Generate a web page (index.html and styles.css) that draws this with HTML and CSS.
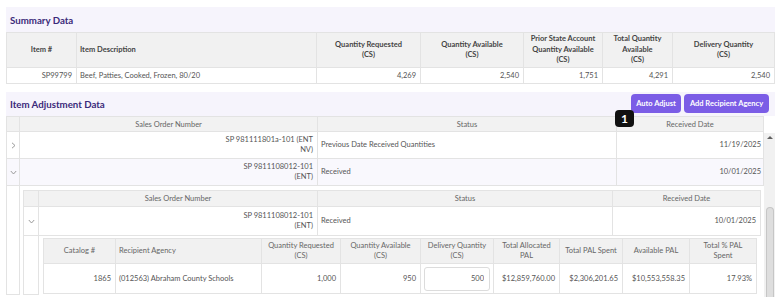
FILE: index.html
```html
<!DOCTYPE html>
<html lang="en">
<head>
<meta charset="utf-8">
<title>Item Adjustment</title>
<link rel="stylesheet" href="styles.css">
</head>
<body>
<div class="page">
  <section class="panel">
    <h2 class="panel-title">Summary Data</h2>
  </section>
  <table class="grid summary">
    <colgroup>
      <col class="c70"><col class="c240"><col class="c104"><col class="c103"><col class="c79"><col class="c70"><col class="c102">
    </colgroup>
    <thead>
      <tr>
        <th>Item #</th>
        <th class="left">Item Description</th>
        <th>Quantity Requested<br>(CS)</th>
        <th>Quantity Available<br>(CS)</th>
        <th>Prior State Account Quantity Available (CS)</th>
        <th>Total Quantity Available<br>(CS)</th>
        <th>Delivery Quantity<br>(CS)</th>
      </tr>
    </thead>
    <tbody>
      <tr>
        <td>SP99799</td>
        <td class="left">Beef, Patties, Cooked, Frozen, 80/20</td>
        <td>4,269</td>
        <td>2,540</td>
        <td>1,751</td>
        <td>4,291</td>
        <td>2,540</td>
      </tr>
    </tbody>
  </table>

  <section class="panel panel-adjust">
    <h2 class="panel-title">Item Adjustment Data</h2>
    <div class="actions">
      <button class="btn btn-auto">Auto Adjust</button>
      <button class="btn btn-add">Add Recipient Agency</button>
      <span class="badge">1</span>
    </div>
  </section>

  <div class="scroll-wrap">
    <table class="grid outer">
      <colgroup>
        <col class="c13"><col class="c298"><col class="c299"><col class="c147">
      </colgroup>
      <thead>
        <tr>
          <th></th>
          <th>Sales Order Number</th>
          <th>Status</th>
          <th>Received Date</th>
        </tr>
      </thead>
      <tbody>
        <tr class="row">
          <td class="exp"><svg width="5" height="7" viewBox="0 0 5 7"><polyline points="1,0.8 4,3.5 1,6.2" fill="none" stroke="#8f8f8f" stroke-width="0.9"/></svg></td>
          <td class="num so">SP 981111801a-101 (ENT<br>NV)</td>
          <td class="txt">Previous Date Received Quantities</td>
          <td class="num date">11/19/2025</td>
        </tr>
        <tr class="row expanded">
          <td class="exp"><svg width="7" height="5" viewBox="0 0 7 5"><polyline points="0.8,1 3.5,4 6.2,1" fill="none" stroke="#8f8f8f" stroke-width="0.9"/></svg></td>
          <td class="num so">SP 9811108012-101<br>(ENT)</td>
          <td class="txt">Received</td>
          <td class="num date">10/01/2025</td>
        </tr>
        <tr class="detail">
          <td class="detail-hier"></td>
          <td class="detail-cell" colspan="3">
            <table class="grid nested">
              <colgroup>
                <col class="c15"><col class="c279"><col class="c295"><col class="c148">
              </colgroup>
              <thead>
                <tr>
                  <th></th>
                  <th>Sales Order Number</th>
                  <th>Status</th>
                  <th>Received Date</th>
                </tr>
              </thead>
              <tbody>
                <tr class="row">
                  <td class="exp"><svg width="7" height="5" viewBox="0 0 7 5"><polyline points="0.8,1 3.5,4 6.2,1" fill="none" stroke="#8f8f8f" stroke-width="0.9"/></svg></td>
                  <td class="num so">SP 9811108012-101<br>(ENT)</td>
                  <td class="txt">Received</td>
                  <td class="num date-nested">10/01/2025</td>
                </tr>
                <tr class="detail">
                  <td class="detail-hier"></td>
                  <td class="detail-cell inner" colspan="3">
                    <table class="grid agencies">
                      <colgroup>
                        <col class="c72"><col class="c146"><col class="c79"><col class="c80"><col class="c73"><col class="c66"><col class="c63"><col class="c67"><col class="c67">
                      </colgroup>
                      <thead>
                        <tr>
                          <th>Catalog #</th>
                          <th class="left">Recipient Agency</th>
                          <th>Quantity Requested<br>(CS)</th>
                          <th>Quantity Available<br>(CS)</th>
                          <th>Delivery Quantity<br>(CS)</th>
                          <th>Total Allocated<br>PAL</th>
                          <th>Total PAL Spent</th>
                          <th>Available PAL</th>
                          <th>Total % PAL<br>Spent</th>
                        </tr>
                      </thead>
                      <tbody>
                        <tr>
                          <td class="num">1865</td>
                          <td class="left">(012563) Abraham County Schools</td>
                          <td class="num">1,000</td>
                          <td class="num">950</td>
                          <td class="input-cell"><input class="qty-input" type="text" value="500"></td>
                          <td class="num">$12,859,760.00</td>
                          <td class="num">$2,306,201.65</td>
                          <td class="num">$10,553,558.35</td>
                          <td class="num">17.93%</td>
                        </tr>
                      </tbody>
                    </table>
                  </td>
                </tr>
              </tbody>
            </table>
          </td>
        </tr>
      </tbody>
    </table>
    <div class="scrollbar">
      <span class="sb-arrow"></span>
      <span class="sb-thumb"></span>
    </div>
  </div>
</div>
</body>
</html>
```

FILE: styles.css
```css
* { box-sizing: border-box; }

html, body {
  margin: 0;
  background: #ffffff;
}

body {
  font-family: Lato, "Noto Sans", sans-serif;
  font-size: 7.5px;
  color: #555555;
}

.page {
  width: 780px;
  padding: 7px 5px 0 6px;
}

/* Panels */
.panel {
  height: 25px;
  background: #f6f4fc;
  display: flex;
  align-items: center;
  padding: 0 6px 0 4px;
}

.panel-title {
  margin: 0;
  font-size: 9.7px;
  font-weight: 700;
  color: #3b2a7a;
}

.panel-adjust {
  margin-top: 8px;
  height: 24px;
  justify-content: space-between;
}

.actions {
  position: relative;
  display: flex;
  gap: 3px;
  align-self: flex-start;
  margin-top: 2px;
}

.btn {
  height: 19px;
  border: 0;
  border-radius: 4px;
  background: #7b5de6;
  color: #ffffff;
  font-family: Lato, "Noto Sans", sans-serif;
  font-size: 7.5px;
  font-weight: 700;
  padding: 0;
  text-align: center;
}

.btn-auto { width: 50px; }
.btn-add { width: 85px; }

.badge {
  position: absolute;
  left: -16px;
  top: 16px;
  width: 19px;
  height: 17px;
  border-radius: 4px;
  background: #111111;
  color: #ffffff;
  font-family: Lato, "Noto Sans", sans-serif;
  font-size: 12px;
  font-weight: 700;
  line-height: 17px;
  text-align: center;
}

/* Grids */
.grid {
  border-collapse: collapse;
  table-layout: fixed;
}

.grid th,
.grid td {
  border: 1px solid #e3e3e3;
  padding: 0 3px;
  vertical-align: middle;
}

.grid .left { text-align: left; }

.c13 { width: 13px; }
.c15 { width: 15px; }
.c63 { width: 63px; }
.c66 { width: 66px; }
.c67 { width: 67px; }
.c70 { width: 70px; }
.c72 { width: 72px; }
.c73 { width: 73px; }
.c79 { width: 79px; }
.c80 { width: 80px; }
.c102 { width: 102px; }
.c103 { width: 103px; }
.c104 { width: 104px; }
.c146 { width: 146px; }
.c147 { width: 147px; }
.c148 { width: 148px; }
.c240 { width: 240px; }
.c279 { width: 279px; }
.c295 { width: 295px; }
.c298 { width: 298px; }
.c299 { width: 299px; }

/* Summary table */
.summary { width: 768px; }

.summary th {
  height: 35px;
  background: #f1f1f1;
  color: #444444;
  font-weight: 700;
  line-height: 10.5px;
  text-align: center;
}

.summary th.left { text-align: left; }

.summary td {
  height: 16px;
  text-align: right;
  padding-right: 4px;
}

.summary td.left { padding-left: 3px; }

/* Outer grid + scrollbar */
.scroll-wrap {
  display: flex;
  height: 181px;
  overflow: hidden;
}

.outer {
  width: 757px;
  align-self: flex-start;
}

.outer th {
  height: 15px;
  background: #f2f2f2;
  color: #666666;
  font-weight: 400;
  text-align: center;
}

.row td {
  height: 27px;
  line-height: 10px;
}

.row.expanded td { background: #f9f8fd; }

.exp {
  text-align: center;
  padding: 0 !important;
}

.exp svg { display: inline-block; vertical-align: middle; }

.num { text-align: right; }

.so { padding-right: 4px !important; }

.txt { padding-left: 3px; }

.date { padding-right: 2px !important; }

.date-nested { padding-right: 4px !important; }

.detail-hier {
  padding: 0 !important;
  background: #ffffff;
}

.detail-cell {
  padding: 4px 2px 0 3px !important;
  border-right: 0 !important;
  border-bottom: 0 !important;
}

/* Nested grid */
.nested { width: 737px; }

.nested th {
  height: 16px;
  background: #f2f2f2;
  color: #666666;
  font-weight: 400;
  text-align: center;
}

.nested .row td { height: 29px; }

.detail-cell.inner {
  padding: 2px 0 0 4px !important;
}

/* Agencies grid */
.agencies { width: 713px; }

.agencies th {
  height: 25px;
  background: #f1f1f1;
  color: #666666;
  font-weight: 400;
  line-height: 10px;
  text-align: center;
}

.agencies th.left { text-align: left; }

.agencies td {
  height: 30px;
  padding: 0 4px 0 3px;
}

.input-cell { padding: 0 4px 0 3px; }

.qty-input {
  display: block;
  width: 66px;
  height: 24px;
  border: 1px solid #dcdcdc;
  border-radius: 3px;
  background: #ffffff;
  padding: 0 5px 0 0;
  text-align: right;
  font-family: Lato, "Noto Sans", sans-serif;
  font-size: 7.5px;
  color: #555555;
}

/* Scrollbar */
.scrollbar {
  width: 11px;
  margin-top: 17px;
  background: #f1f1f1;
  display: flex;
  flex-direction: column;
  align-items: center;
}

.sb-arrow {
  width: 0;
  height: 0;
  margin-top: 3px;
  border-left: 3px solid transparent;
  border-right: 3px solid transparent;
  border-bottom: 3px solid #606060;
}

.sb-thumb {
  flex: 1;
  width: 8px;
  margin-top: 68px;
  background: #dedede;
  border: 1px solid #c6c6c6;
  border-bottom: 0;
  border-radius: 4px 4px 0 0;
}
```
